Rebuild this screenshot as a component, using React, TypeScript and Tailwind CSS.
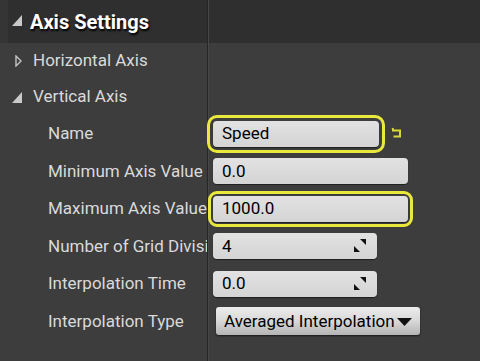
import React from 'react';

const SpinIcon = () => (
  <svg width="13" height="14" viewBox="0 0 13 14" className="shrink-0">
    <polygon points="6,0 12,0 12,6" fill="#111" />
    <polygon points="0,7 0,13 6,13" fill="#111" />
  </svg>
);

const ResetIcon = () => (
  <svg width="12" height="12" viewBox="0 0 12 12" className="shrink-0">
    <path d="M1.5 1 L2.5 3.5 M1 3.5 H9 V9.5 H2.5" fill="none" stroke="#d9d936" strokeWidth="2" />
  </svg>
);

const ExpandedArrow = () => (
  <svg width="10" height="11" viewBox="0 0 10 11">
    <polygon points="10,0 10,11 0,11" fill="#c9c9c9" />
  </svg>
);

const CollapsedArrow = () => (
  <svg width="7" height="12" viewBox="0 0 7 12">
    <polygon points="1,1 6,6 1,11" fill="none" stroke="#c2c2c2" strokeWidth="1.4" />
  </svg>
);

const inputBase =
  'h-[26px] flex items-center pl-[9px] pr-2 rounded-[4px] bg-gradient-to-b from-[#e2e2e2] to-[#d4d4d4] text-[17px] text-black shadow-[0_1px_1px_rgba(0,0,0,0.5)]';

const Row = ({ label, children }: { label: string; children: React.ReactNode }) => (
  <div className="flex h-[37.5px]">
    <div className="w-[208px] shrink-0 border-r border-[#262626] flex items-center pl-[48px] overflow-hidden whitespace-nowrap text-[17px] text-[#dadada]">
      {label}
    </div>
    <div className="flex-1 border-l border-[#474747] flex items-center pl-[4px]">{children}</div>
  </div>
);

export default function App() {
  return (
    <div className="w-[480px] h-[361px] bg-[#3d3d3d] overflow-hidden flex flex-col font-['Roboto',sans-serif]">
      <div className="flex h-[43px] shrink-0 bg-[#2f2f2f]">
        <div className="w-[208px] shrink-0 border-r border-[#262626] flex items-center">
          <div className="w-[8px] h-full bg-[#353535]" />
          <div className="ml-[4px] mb-[2px]">
            <ExpandedArrow />
          </div>
          <span className="ml-[8px] text-[20px] font-bold text-white [text-shadow:1px_2px_2px_#000]">
            Axis Settings
          </span>
        </div>
        <div className="flex-1 border-l border-[#474747]" />
      </div>

      <div className="flex h-[36px] shrink-0">
        <div className="w-[208px] shrink-0 border-r border-[#262626] flex items-center pl-[15px]">
          <CollapsedArrow />
          <span className="ml-[11px] text-[17px] text-[#dadada]">Horizontal Axis</span>
        </div>
        <div className="flex-1 border-l border-[#474747]" />
      </div>

      <div className="flex h-[36px] shrink-0">
        <div className="w-[208px] shrink-0 border-r border-[#262626] flex items-center pl-[12px]">
          <ExpandedArrow />
          <span className="ml-[11px] text-[17px] text-[#dadada]">Vertical Axis</span>
        </div>
        <div className="flex-1 border-l border-[#474747]" />
      </div>

      <Row label="Name">
        <div className={`${inputBase} w-[166px] outline-[3px] outline-solid outline-[#e9e93c] outline-offset-[3px]`}>
          Speed
        </div>
        <div className="ml-[12px] mb-[2px]">
          <ResetIcon />
        </div>
      </Row>
      <Row label="Minimum Axis Value">
        <div className={`${inputBase} w-[195px]`}>0.0</div>
      </Row>
      <Row label="Maximum Axis Value">
        <div className={`${inputBase} w-[195px] outline-[3px] outline-solid outline-[#e9e93c] outline-offset-[2px]`}>
          1000.0
        </div>
      </Row>
      <Row label="Number of Grid Divisions">
        <div className={`${inputBase} w-[164px] justify-between pr-[10px]`}>
          <span>4</span>
          <SpinIcon />
        </div>
      </Row>
      <Row label="Interpolation Time">
        <div className={`${inputBase} w-[164px] justify-between pr-[10px]`}>
          <span>0.0</span>
          <SpinIcon />
        </div>
      </Row>
      <Row label="Interpolation Type">
        <div className="ml-[3px] h-[28px] w-[204px] flex items-center pl-[8px] rounded-[3px] bg-gradient-to-b from-[#ececec] via-[#d8d8d8] to-[#b4b4b4] text-[17px] text-black shadow-[0_1px_2px_rgba(0,0,0,0.6)] whitespace-nowrap">
          Averaged Interpolation
          <svg width="15" height="8" viewBox="0 0 15 8" className="ml-[2px] mt-[1px] shrink-0">
            <polygon points="0,0 15,0 7.5,8" fill="#111" />
          </svg>
        </div>
      </Row>

      <div className="flex flex-1">
        <div className="w-[208px] shrink-0 border-r border-[#262626]" />
        <div className="flex-1 border-l border-[#474747]" />
      </div>
    </div>
  );
}
